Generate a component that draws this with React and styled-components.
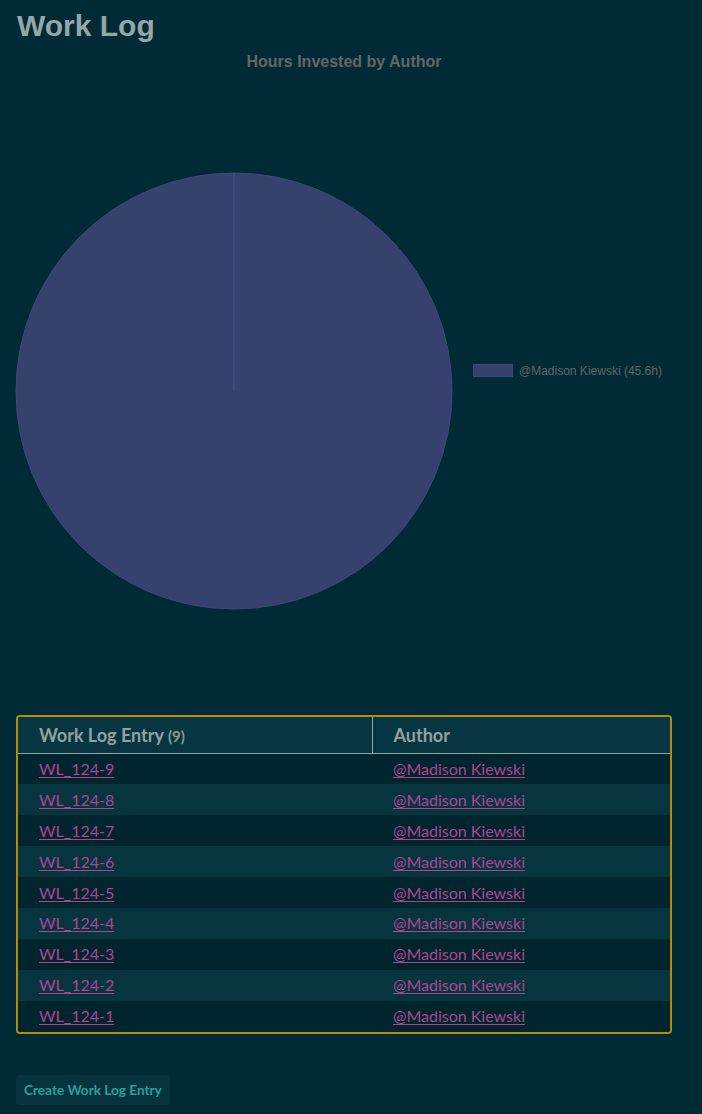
import React from 'react';
import styled, { createGlobalStyle } from 'styled-components';

const entries = [9, 8, 7, 6, 5, 4, 3, 2, 1].map((n) => ({
    id: `WL_124-${n}`,
    author: '@Madison Kiewski'
}));

const PIE_COLOR = '#36416e';

const GlobalStyle = createGlobalStyle`
    html, body {
        margin: 0;
        padding: 0;
        background: #002b36;
    }
    body {
        font-family: Lato, "Liberation Sans", sans-serif;
        -webkit-font-smoothing: antialiased;
    }
`;

const Pie = () => (
    <PieSvg width="438" height="438" viewBox="-219 -219 438 438">
        <circle cx="0" cy="0" r="218" fill={PIE_COLOR} stroke="#3d4877" strokeWidth="1" />
        <line x1="0" y1="0" x2="0" y2="-218" stroke="#47528a" strokeWidth="1" />
    </PieSvg>
);

const App = () => (
    <Page>
        <GlobalStyle />
        <Title>Work Log</Title>

        <Chart>
            <ChartTitle>Hours Invested by Author</ChartTitle>
            <ChartBody>
                <Pie />
                <Legend>
                    <LegendBox />
                    <LegendLabel>@Madison Kiewski (45.6h)</LegendLabel>
                </Legend>
            </ChartBody>
        </Chart>

        <TableFrame>
            <Table>
                <thead>
                    <tr>
                        <HeadCell divider>
                            Work Log Entry <Count>(9)</Count>
                        </HeadCell>
                        <HeadCell>Author</HeadCell>
                    </tr>
                </thead>
                <tbody>
                    {entries.map((entry, i) => (
                        <Row key={entry.id} even={i % 2 === 1}>
                            <Cell><Link href="#">{entry.id}</Link></Cell>
                            <Cell><Link href="#">{entry.author}</Link></Cell>
                        </Row>
                    ))}
                </tbody>
            </Table>
        </TableFrame>

        <CreateButton>Create Work Log Entry</CreateButton>
    </Page>
);

export default App;

const Page = styled.div`
    padding: 8px 30px 10px 16px;
    min-height: 1096px;
`;

const Title = styled.h1`
    margin: 0 0 0 1px;
    font-family: "Liberation Sans", Arial, sans-serif;
    font-size: 30px;
    font-weight: 700;
    line-height: 36px;
    color: #97a6a8;
`;

const Chart = styled.div`
    display: flex;
    flex-direction: column;
    align-items: center;
`;

const ChartTitle = styled.div`
    margin-top: 8px;
    font-family: "Liberation Sans", Arial, sans-serif;
    font-size: 16px;
    font-weight: 700;
    line-height: 20px;
    color: #666;
`;

const ChartBody = styled.div`
    align-self: stretch;
    height: 638px;
    display: flex;
    align-items: center;
`;

const PieSvg = styled.svg`
    display: block;
    margin-left: -1px;
    flex: none;
`;

const Legend = styled.div`
    display: flex;
    align-items: center;
    gap: 6px;
    margin-left: 20px;
    margin-top: -41px;
`;

const LegendBox = styled.span`
    width: 40px;
    height: 13px;
    box-sizing: border-box;
    background: ${PIE_COLOR};
    border: 1px solid #3d4877;
`;

const LegendLabel = styled.span`
    font-family: "Liberation Sans", Arial, sans-serif;
    font-size: 12px;
    color: #666;
`;

const TableFrame = styled.div`
    width: 656px;
    margin-top: 5px;
    box-sizing: border-box;
    border: 2px solid #b58b0c;
    border-radius: 4px;
    overflow: hidden;
`;

const Table = styled.table`
    width: 100%;
    border-collapse: collapse;
    table-layout: fixed;
`;

const HeadCell = styled.th`
    height: 36px;
    padding: 0 21px;
    text-align: left;
    background: #073642;
    color: #93a1a1;
    font-size: 18px;
    font-weight: 700;
    border-bottom: 1px solid #8fa7a8;
    border-right: ${(p) => (p.divider ? '1px solid #8fa7a8' : 'none')};
    width: ${(p) => (p.divider ? '354px' : 'auto')};
    box-sizing: border-box;
`;

const Count = styled.span`
    font-size: 15px;
    color: #8a9a9b;
`;

const Row = styled.tr`
    background: ${(p) => (p.even ? '#063540' : '#00252e')};
`;

const Cell = styled.td`
    height: 30.9px;
    padding: 0 21px;
    font-size: 16px;
    line-height: 20px;
`;

const Link = styled.a`
    color: #b0448f;
    text-decoration: underline;
    text-underline-offset: 2px;
`;

const CreateButton = styled.button`
    margin-top: 41px;
    height: 30px;
    padding: 0 8px;
    border: none;
    border-radius: 4px;
    background: #06333d;
    color: #2aa198;
    font-family: Lato, "Liberation Sans", sans-serif;
    font-size: 13.6px;
    font-weight: 700;
    cursor: pointer;
`;
